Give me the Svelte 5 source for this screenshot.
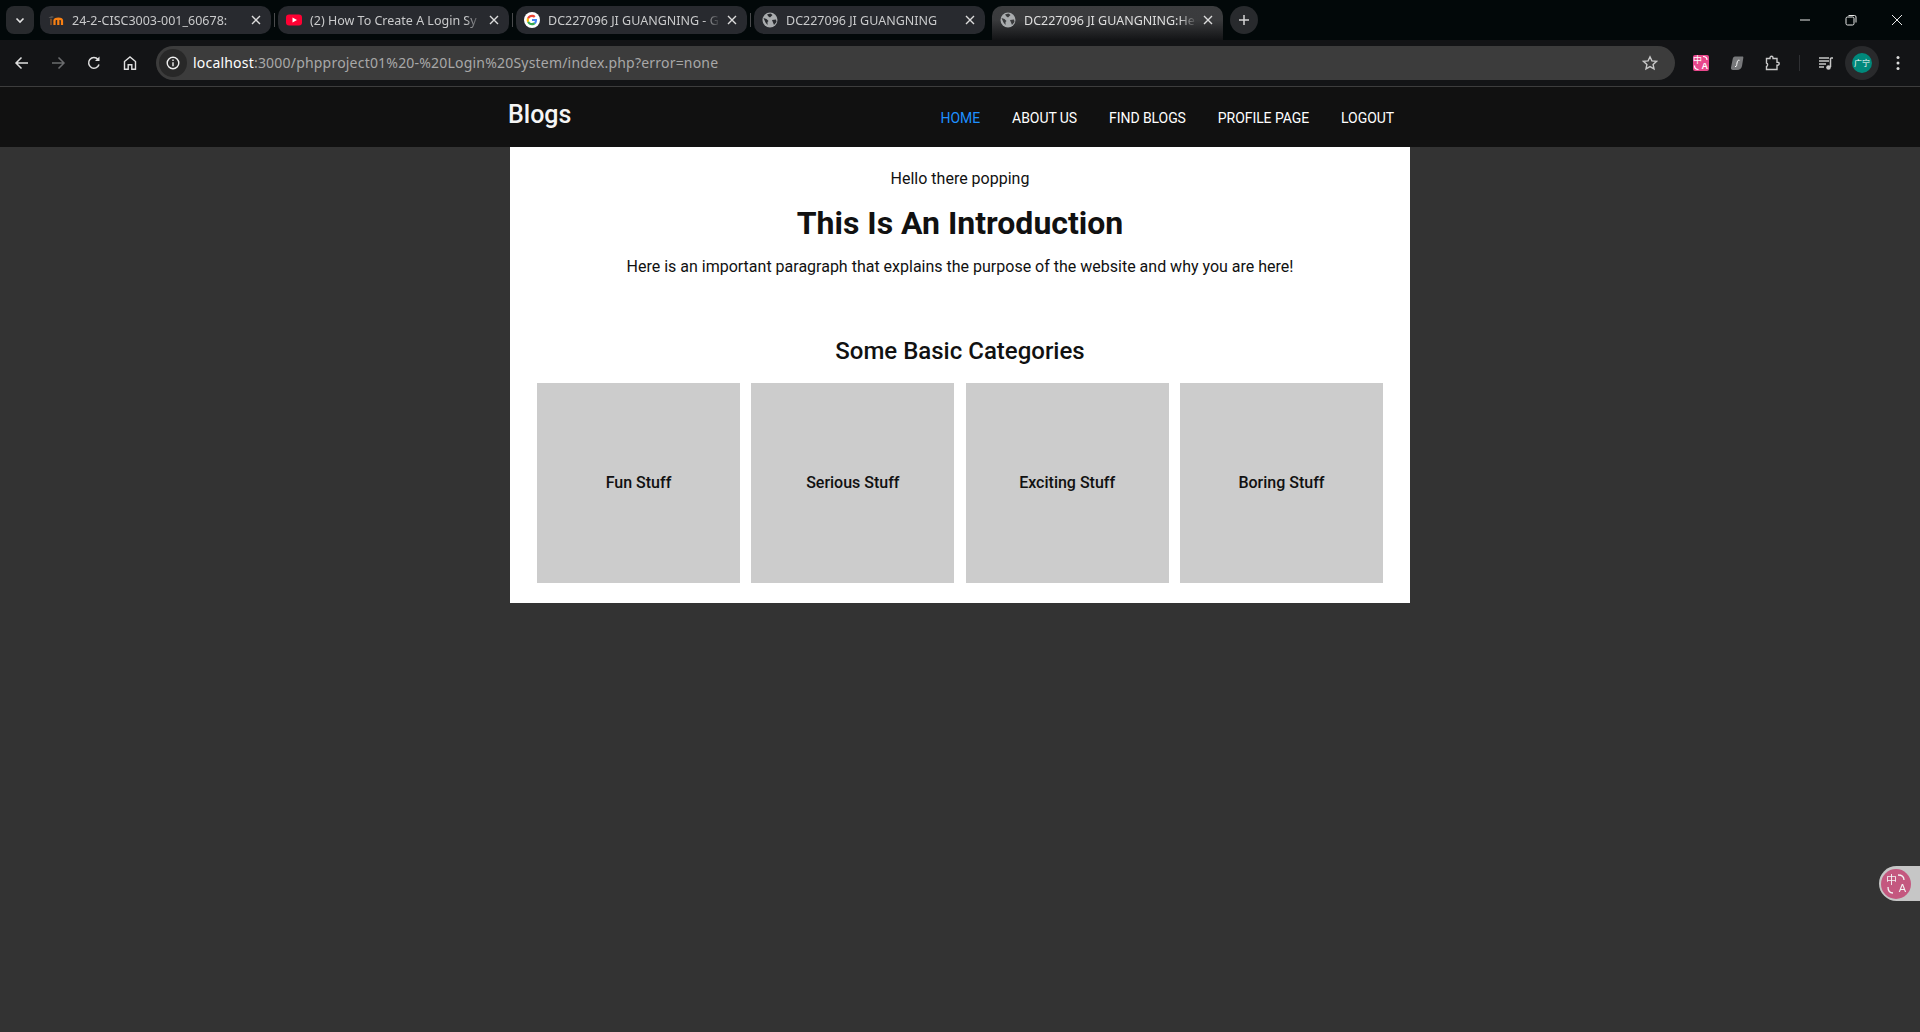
<script>
  const tabs = [
    { title: '24-2-CISC3003-001_60678:', icon: 'moodle' },
    { title: '(2) How To Create A Login Sy', icon: 'youtube' },
    { title: 'DC227096 JI GUANGNING - G', icon: 'google' },
    { title: 'DC227096 JI GUANGNING', icon: 'globe' },
    { title: 'DC227096 JI GUANGNING:He', icon: 'globe', active: true }
  ];
  const links = ['Home', 'About Us', 'Find Blogs', 'Profile Page', 'Logout'];
  const categories = ['Fun Stuff', 'Serious Stuff', 'Exciting Stuff', 'Boring Stuff'];
</script>

<div class="chrome">
  <div class="tabstrip">
    <button class="tab-search" aria-label="Search tabs">
      <svg width="12" height="12" viewBox="0 0 12 12"><path d="M2.500 4.500 6 8l3.500-3.500" fill="none" stroke="#e3e3e3" stroke-width="1.600"/></svg>
    </button>
    <div class="tabs">
      {#each tabs as tab, i}
        <div class="tab" class:active={tab.active}>
          <span class="favicon">
            {#if tab.icon === 'moodle'}
              <svg width="16" height="16" viewBox="0 0 16 16">
                <path d="M0.500 5.500 4 4 6 5 3 6.500z" fill="#555"/>
                <path d="M3 7V13" stroke="#8a5426" stroke-width="1.600"/>
                <path d="M6.500 13V8.500C6.500 6 14 6 14 8.500V13M10.300 7.500V13" fill="none" stroke="#f98012" stroke-width="2.200"/>
              </svg>
            {:else if tab.icon === 'youtube'}
              <svg width="16" height="16" viewBox="0 0 16 16">
                <rect y="2.500" width="16" height="11" rx="3" fill="#ff0033"/>
                <path d="M6.500 5.500v5L11 8z" fill="#fff"/>
              </svg>
            {:else if tab.icon === 'google'}
              <svg width="16" height="16" viewBox="0 0 16 16">
                <circle cx="8" cy="8" r="8" fill="#fff"/>
                <path d="M13 8.100c0-.4 0-.8-.1-1.100H8v2.100h2.900c-.1.700-.5 1.300-1.100 1.700l1.700 1.300c1-.9 1.500-2.300 1.500-4z" fill="#4285f4"/>
                <path d="M8 13.200c1.400 0 2.600-.5 3.500-1.300l-1.700-1.300c-.5.300-1.100.5-1.800.5-1.400 0-2.600-.9-3-2.200L3.200 10.200c.9 1.800 2.700 3 4.800 3z" fill="#34a853"/>
                <path d="M5 8.900c-.2-.6-.2-1.200 0-1.800L3.200 5.800c-.7 1.400-.7 3 0 4.400z" fill="#fbbc05"/>
                <path d="M8 4.900c.8 0 1.500.3 2 .8l1.500-1.500C10.600 3.300 9.400 2.800 8 2.800c-2.100 0-3.900 1.200-4.800 3L5 7.100c.4-1.300 1.600-2.200 3-2.200z" fill="#ea4335"/>
              </svg>
            {:else}
              <svg width="16" height="16" viewBox="0 0 16 16">
                <circle cx="8" cy="8" r="7.500" fill="#a9acae"/>
                <path d="M1.500 6l3 1 2 2-1 1v3L3.500 10.500zM8.500 1.500 10.500 3 8 5.500 6.500 4.500 5 2.500zM10 8l4-.5.500 2.500L12 13l-1-2.500z" fill={tab.active ? '#3a3b3d' : '#282a2e'}/>
              </svg>
            {/if}
          </span>
          <span class="tab-title">{tab.title}</span>
          <svg class="tab-close" width="10" height="10" viewBox="0 0 10 10"><path d="M1 1l8 8M9 1 1 9" stroke="#dcdcdc" stroke-width="1.400"/></svg>
          {#if i < 3}<span class="tab-sep"></span>{/if}
        </div>
      {/each}
      <button class="new-tab" aria-label="New tab">
        <svg width="12" height="12" viewBox="0 0 12 12"><path d="M6 1v10M1 6h10" stroke="#d5d5d5" stroke-width="1.500"/></svg>
      </button>
    </div>
    <div class="window-controls">
      <svg width="12" height="12" viewBox="0 0 12 12"><path d="M1 6h10" stroke="#e8e8e8"/></svg>
      <svg width="12" height="12" viewBox="0 0 12 12"><rect x="1" y="3" width="8" height="8" rx="1.500" fill="none" stroke="#e8e8e8"/><path d="M3.500 1.500H9.500a1.500 1.500 0 0 1 1.500 1.500V8.500" fill="none" stroke="#e8e8e8"/></svg>
      <svg width="12" height="12" viewBox="0 0 12 12"><path d="M1 1l10 10M11 1 1 11" stroke="#e8e8e8"/></svg>
    </div>
  </div>

  <div class="toolbar">
    <button class="tool" aria-label="Back">
      <svg width="16" height="16" viewBox="0 0 16 16"><path d="M14 8H2.500M7.500 2.500 2 8l5.500 5.500" fill="none" stroke="#dfdfdf" stroke-width="1.500"/></svg>
    </button>
    <button class="tool" aria-label="Forward">
      <svg width="16" height="16" viewBox="0 0 16 16"><path d="M2 8h11.500M8.500 2.500 14 8l-5.500 5.500" fill="none" stroke="#6b6c6e" stroke-width="1.500"/></svg>
    </button>
    <button class="tool" aria-label="Reload">
      <svg width="16" height="16" viewBox="0 0 16 16"><path d="M13 9.500A5.300 5.300 0 1 1 12 4.500" fill="none" stroke="#dfdfdf" stroke-width="1.500"/><path d="M13.500 1.500V6H9z" fill="#dfdfdf"/></svg>
    </button>
    <button class="tool" aria-label="Home">
      <svg width="16" height="16" viewBox="0 0 16 16"><path d="M2.500 14.200V6.500L8 2l5.500 4.500v7.700H9.800V9.800H6.200v4.400z" fill="none" stroke="#dfdfdf" stroke-width="1.400"/></svg>
    </button>

    <div class="omnibox">
      <span class="site-info">
        <svg width="14" height="14" viewBox="0 0 14 14"><circle cx="7" cy="7" r="5.800" fill="none" stroke="#f0f0f0" stroke-width="1.400"/><path d="M7 6.200v4M7 3.600v1.500" stroke="#f0f0f0" stroke-width="1.400"/></svg>
      </span>
      <span class="url"><span class="host">localhost</span>:3000/phpproject01%20-%20Login%20System/index.php?error=none</span>
      <svg class="star" width="16" height="16" viewBox="0 0 16 16"><path d="M8 1.800l1.900 4.100 4.500.5-3.300 3 .9 4.400L8 11.600l-4 2.200.9-4.400-3.300-3 4.500-.5z" fill="none" stroke="#c8c8c8" stroke-width="1.400"/></svg>
    </div>

    <div class="extensions">
      <button class="tool" aria-label="Translate">
        <span class="translate-ext">
          <span class="zh">中</span><span class="en">A</span>
          <svg class="arcs" viewBox="0 0 16 16"><path d="M10 1.500c2.500 0 4 1 4 3.500M1.500 10.500c0 3 1 4 4 4" fill="none" stroke="#fff" stroke-width="1.200"/></svg>
        </span>
      </button>
      <button class="tool" aria-label="Extension">
        <svg width="14" height="16" viewBox="0 0 14 16"><path d="M5 1.500h7.500c.8 0 1 .7.800 1.500L12 11c-.5 2.500-2.500 4-5 4H3c-1.500 0-2.300-1-2-2.500L2.700 4C3 2.500 3.700 1.500 5 1.500z" fill="#77787a"/><path d="M5 11.500c2 .5 1.500-1.500 2-3.500s.5-3 2.500-2.700" fill="none" stroke="#fff" stroke-width="1"/></svg>
      </button>
      <button class="tool" aria-label="Extensions">
        <svg width="16" height="16" viewBox="0 0 16 16"><path d="M1.500 3.500H5V2.800a1.500 1.500 0 0 1 3 0v.7h4v3.700h.7a1.500 1.500 0 0 1 0 3H12v4.300H1.500v-3c1.500-.5 1.500-3 0-3.500z" fill="none" stroke="#c8c8c8" stroke-width="1.400"/></svg>
      </button>
      <span class="divider"></span>
      <button class="tool" aria-label="Media">
        <svg width="16" height="16" viewBox="0 0 16 16"><path d="M1 3h10M1 6h10M1 9h7M1 12h5" stroke="#c8c8c8" stroke-width="1.300"/><path d="M12.500 3v9" stroke="#c8c8c8" stroke-width="1.500"/><path d="M12.500 3H15" stroke="#c8c8c8" stroke-width="1.500"/><circle cx="10.500" cy="12.500" r="2.300" fill="#c8c8c8"/></svg>
      </button>
      <span class="avatar-wrap"><span class="avatar">广宁</span></span>
      <button class="tool" aria-label="Menu">
        <svg width="4" height="16" viewBox="0 0 4 16"><circle cx="2" cy="2.500" r="1.500" fill="#dcdcdc"/><circle cx="2" cy="8" r="1.500" fill="#dcdcdc"/><circle cx="2" cy="13.500" r="1.500" fill="#dcdcdc"/></svg>
      </button>
    </div>
  </div>
</div>

<header class="site-header">
  <div class="nav-inner">
    <a class="logo" href="#top">Blogs</a>
    <ul class="nav-links">
      {#each links as link, i}
        <li><a href="#top" class:current={i === 0}>{link}</a></li>
      {/each}
    </ul>
  </div>
</header>

<main class="wrapper">
  <p class="greeting">Hello there popping</p>
  <h1>This Is An Introduction</h1>
  <p class="intro">Here is an important paragraph that explains the purpose of the website and why you are here!</p>
  <h2>Some Basic Categories</h2>
  <div class="categories">
    {#each categories as category}
      <div class="category">{category}</div>
    {/each}
  </div>
</main>

<div class="float-translate">
  <span class="float-icon">
    <span class="zh">中</span><span class="en">A</span>
    <svg class="arcs" viewBox="0 0 30 30"><path d="M17 6c4 0 6 1.500 6 5M7 18c0 4 1.500 6 5 6" fill="none" stroke="#f3f3f3" stroke-width="1.300"/></svg>
  </span>
</div>

<style>
  :global(body) {
    background: #333;
    font-family: Roboto, sans-serif;
    min-height: 1032px;
    overflow: hidden;
  }
  button {
    border: none;
    background: none;
    padding: 0;
  }
  .chrome {
    font-family: "Noto Sans", sans-serif;
  }
  .tabstrip {
    height: 40px;
    background: #020809;
    display: flex;
    align-items: flex-start;
    padding: 6px 0 0 6px;
    box-sizing: border-box;
  }
  .tab-search {
    width: 28px;
    height: 28px;
    border-radius: 8px;
    background: #282a2d;
    display: flex;
    align-items: center;
    justify-content: center;
    margin-right: 6px;
    flex: none;
  }
  .tabs {
    display: flex;
    gap: 7px;
    flex: 1;
  }
  .tab {
    position: relative;
    width: 231px;
    height: 28px;
    border-radius: 10px;
    background: #282a2f;
    display: flex;
    align-items: center;
    padding: 0 10px 0 8px;
    box-sizing: border-box;
    color: #c9cacb;
    font-size: 12.500px;
  }
  .tab.active {
    height: 34px;
    padding-bottom: 6px;
    border-radius: 10px 10px 0 0;
    background: linear-gradient(#3b3c3e, #3a3b3d 40%, #131416);
    color: #dedede;
  }
  .favicon {
    width: 16px;
    height: 16px;
    flex: none;
    margin-right: 8px;
  }
  .favicon svg {
    display: block;
  }
  .tab-title {
    flex: 1;
    white-space: nowrap;
    overflow: hidden;
    mask-image: linear-gradient(to left, transparent, #000 18px);
  }
  .tab-close {
    flex: none;
    margin-left: 6px;
  }
  .tab-sep {
    position: absolute;
    right: -4px;
    top: 7px;
    width: 1px;
    height: 14px;
    background: #4a4b4d;
  }
  .new-tab {
    width: 28px;
    height: 28px;
    border-radius: 50%;
    background: #282a2d;
    display: flex;
    align-items: center;
    justify-content: center;
  }
  .window-controls {
    display: flex;
    gap: 34px;
    margin-top: 8px;
    padding-right: 17px;
  }
  .window-controls svg {
    display: block;
  }
  .toolbar {
    height: 46px;
    background: #131416;
    border-bottom: 1px solid #3d3d3d;
    display: flex;
    align-items: center;
    padding-left: 4px;
  }
  .tool {
    width: 36px;
    height: 34px;
    display: flex;
    align-items: center;
    justify-content: center;
    flex: none;
  }
  .omnibox {
    flex: 1;
    height: 34px;
    margin-left: 8px;
    border-radius: 17px;
    background: #3c3c3c;
    display: flex;
    align-items: center;
    padding: 0 17px 0 3px;
  }
  .site-info {
    width: 28px;
    height: 28px;
    border-radius: 50%;
    background: #282828;
    display: flex;
    align-items: center;
    justify-content: center;
    margin-right: 6px;
    flex: none;
  }
  .url {
    flex: 1;
    font-size: 14px;
    line-height: 20px;
    letter-spacing: 0.2px;
    color: #a8a8a8;
    white-space: nowrap;
  }
  .host {
    color: #fff;
  }
  .extensions {
    display: flex;
    align-items: center;
    padding-left: 8px;
    padding-right: 4px;
  }
  .translate-ext {
    position: relative;
    display: block;
    width: 16px;
    height: 16px;
    border-radius: 2px;
    background: #e8488c;
    color: #fff;
    overflow: hidden;
  }
  .translate-ext .zh {
    position: absolute;
    left: 0;
    top: 0;
    font: 9px/9px "Noto Sans CJK SC", sans-serif;
  }
  .translate-ext .en {
    position: absolute;
    right: 1px;
    bottom: 0;
    font: bold 9px/9px "Liberation Sans", sans-serif;
  }
  .arcs {
    position: absolute;
    inset: 0;
    width: 100%;
    height: 100%;
  }
  .divider {
    width: 1px;
    height: 16px;
    background: #2f3033;
    margin: 0 8px;
    flex: none;
  }
  .avatar-wrap {
    width: 34px;
    height: 34px;
    border-radius: 50%;
    background: #292a2c;
    display: flex;
    align-items: center;
    justify-content: center;
    margin: 0 1px;
    flex: none;
  }
  .avatar {
    width: 20px;
    height: 20px;
    border-radius: 50%;
    background: #00897b;
    color: #fff;
    font: 8px/20px "Noto Sans CJK SC", sans-serif;
    text-align: center;
    white-space: nowrap;
  }
  .site-header {
    height: 60px;
    background: #111;
  }
  .nav-inner {
    width: 900px;
    margin: 0 auto;
    height: 100%;
    display: flex;
    justify-content: space-between;
    align-items: flex-start;
  }
  .logo {
    font-size: 25px;
    font-weight: 500;
    color: #f5f5f5;
    text-decoration: none;
    margin: 13px 0 0 -2px;
    line-height: 30px;
  }
  .nav-links {
    list-style: none;
    display: flex;
    gap: 32px;
    margin: 21px 16px 0 0;
    padding: 0;
  }
  .nav-links a {
    color: #fff;
    font-size: 14px;
    line-height: 20px;
    letter-spacing: -0.07px;
    text-transform: uppercase;
    text-decoration: none;
  }
  .nav-links a.current {
    color: #1e90ff;
  }
  .wrapper {
    width: 900px;
    margin: 0 auto;
    background: #fff;
    box-sizing: border-box;
    padding: 20px 27px 20px;
    text-align: center;
    color: #111;
    height: 456px;
  }
  .greeting {
    font-size: 16px;
    line-height: 24px;
    margin: 0;
  }
  h1 {
    font-size: 32px;
    line-height: 40px;
    font-weight: 700;
    margin: 12px 0 0;
  }
  .intro {
    font-size: 16px;
    line-height: 24px;
    margin: 12px 0 0;
  }
  h2 {
    font-size: 24px;
    line-height: 30px;
    font-weight: 500;
    margin: 57px 0 0;
  }
  .categories {
    display: flex;
    justify-content: space-between;
    margin-top: 17px;
  }
  .category {
    width: 203px;
    height: 200px;
    box-sizing: border-box;
    padding-bottom: 2px;
    background: #ccc;
    display: flex;
    align-items: center;
    justify-content: center;
    font-size: 16px;
    font-weight: 500;
  }
  .float-translate {
    position: fixed;
    right: 0;
    top: 866px;
    width: 41px;
    height: 35px;
    border-radius: 18px 0 0 18px;
    background: #c6c6c6;
    display: flex;
    align-items: center;
    padding-left: 2px;
    box-sizing: border-box;
  }
  .float-icon {
    position: relative;
    display: block;
    width: 30px;
    height: 30px;
    border-radius: 50%;
    background: #c4587f;
    color: #f3f3f3;
  }
  .float-icon .zh {
    position: absolute;
    left: 5px;
    top: 5px;
    font: 11px/11px "Noto Sans CJK SC", sans-serif;
  }
  .float-icon .en {
    position: absolute;
    right: 5px;
    bottom: 5px;
    font: 11px/11px "Liberation Sans", sans-serif;
  }
</style>
